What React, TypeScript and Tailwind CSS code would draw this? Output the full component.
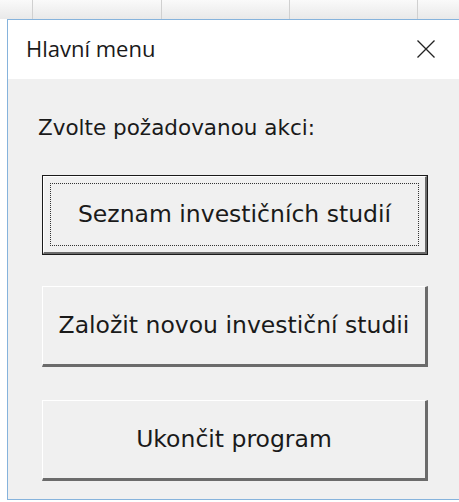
const tahoma = { fontFamily: '"DejaVu Sans", Verdana, sans-serif' };

// Classic VBA-style command button with raised 3D edges
function FormButton({ label, isDefault = false }: { label: string; isDefault?: boolean }) {
  if (isDefault) {
    return (
      <div className="w-[386px] h-[80px] border border-[#1a1a1a] bg-[#f0f0f0]">
        <div className="h-full w-full border-t border-l border-white border-r-2 border-b-2 border-r-[#6b6b6b] border-b-[#6b6b6b] p-[6px]">
          <div className="h-full w-full border border-dotted border-[#333] flex items-center justify-center">
            <span className="text-[23.5px] text-[#1a1a1a]">{label}</span>
          </div>
        </div>
      </div>
    );
  }
  return (
    <div className="w-[386px] h-[81px] bg-[#f0f0f0] border-t border-l border-white border-r-[3px] border-b-[3px] border-r-[#6b6b6b] border-b-[#6b6b6b] flex items-center justify-center">
      <span className="text-[23.5px] text-[#1a1a1a]">{label}</span>
    </div>
  );
}

export default function App() {
  return (
    <div className="w-[459px] h-[502px] bg-white overflow-hidden relative" style={tahoma}>
      {/* spreadsheet gridlines behind the form */}
      <div className="h-[19px] flex bg-gradient-to-b from-[#fafafa] to-[#e9e9e9]">
        <div className="w-[33px] border-r border-[#d0d0d0]" />
        <div className="w-[129px] border-r border-[#d0d0d0]" />
        <div className="w-[128px] border-r border-[#d0d0d0]" />
        <div className="w-[128px] border-r border-[#d0d0d0]" />
        <div className="flex-1" />
      </div>

      <div className="ml-[7px] w-[470px] h-[481px] border-l border-t border-b border-[#86b3dc] flex flex-col">
        <div className="h-[59px] bg-white flex items-center justify-between pl-[18px]">
          <span className="text-[22px] text-[#1a1a1a] mt-[-2px]" style={{ fontFamily: '"Open Sans", "Noto Sans", sans-serif' }}>
            Hlavní menu
          </span>
          <svg width="20" height="20" viewBox="0 0 20 20" className="mr-[41px] mt-[-2px]">
            <path d="M1.5 1.5 L18.5 18.5 M18.5 1.5 L1.5 18.5" stroke="#222" strokeWidth="1.3" />
          </svg>
        </div>

        <div className="flex-1 bg-[#f0f0f0] pl-[34px] pt-[35px]">
          <div className="text-[21.5px] text-[#1a1a1a] ml-[-4px] leading-[28px]">
            Zvolte požadovanou akci:
          </div>
          <div className="mt-[33px] flex flex-col gap-[31px]">
            <FormButton label="Seznam investičních studií" isDefault />
            <FormButton label="Založit novou investiční studii" />
          </div>
          <div className="mt-[33px]">
            <FormButton label="Ukončit program" />
          </div>
        </div>
      </div>
    </div>
  );
}
